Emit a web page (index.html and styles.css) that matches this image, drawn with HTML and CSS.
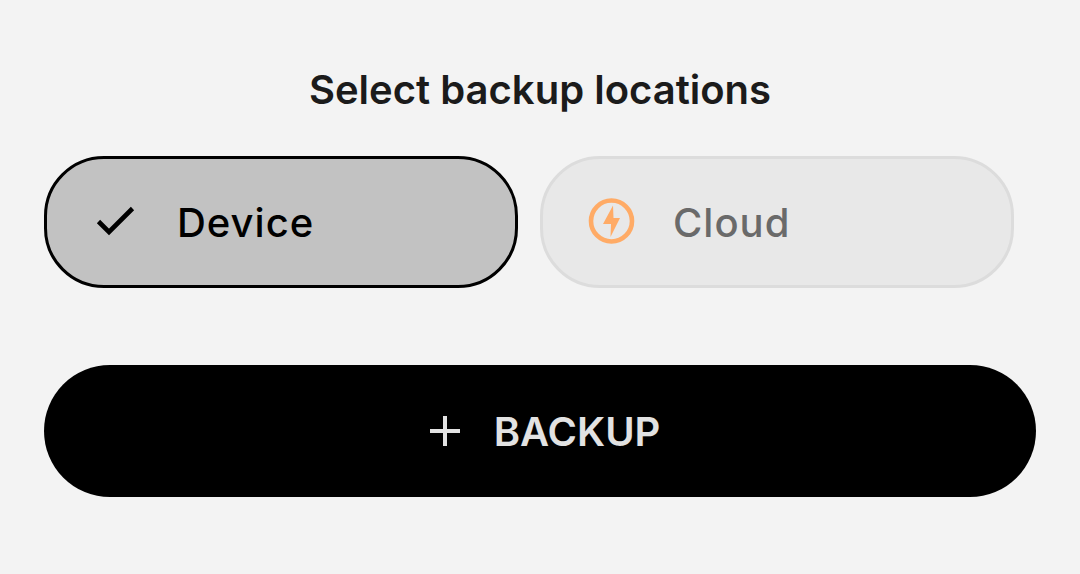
FILE: index.html
```
<!DOCTYPE html>
<html lang="en">
<head>
<meta charset="utf-8">
<meta name="viewport" content="width=device-width, initial-scale=1">
<title>Backup</title>
<link rel="stylesheet" href="styles.css">
</head>
<body>
<main class="panel">
  <h1 class="title">Select backup locations</h1>
  <div class="options">
    <button class="option selected" type="button" aria-pressed="true">
      <svg class="icon" viewBox="0 0 48 48" aria-hidden="true"><path fill="none" stroke="currentColor" stroke-width="4.600" d="M7.500 23.500 18 34 41.500 10.500"/></svg>
      <span>Device</span>
    </button>
    <button class="option" type="button" aria-pressed="false">
      <svg class="icon cloud-icon" viewBox="0 0 48 48" aria-hidden="true"><circle cx="24.500" cy="23" r="20.500" fill="none" stroke="currentColor" stroke-width="4.600"/><path fill="currentColor" d="M26 7.500 16 26h8l-.500 13L33 20h-6.500z"/></svg>
      <span>Cloud</span>
    </button>
  </div>
  <button class="backup" type="button">
    <svg class="plus" viewBox="0 0 30 30" aria-hidden="true"><path fill="none" stroke="currentColor" stroke-width="4" d="M15 0v30M0 15h30"/></svg>
    <span>BACKUP</span>
  </button>
</main>
</body>
</html>
```
FILE: styles.css
```
* { box-sizing: border-box; }
body {
  margin: 0;
  background: #f3f3f3;
  font-family: Inter, "Liberation Sans", sans-serif;
}
.panel { padding: 64px 44px; }
.title {
  margin: 0 0 40px;
  color: #1b1b1b;
  font-size: 40px;
  font-weight: 600;
  line-height: 52px;
  text-align: center;
}
.options {
  display: grid;
  grid-template-columns: 1fr 1fr;
  gap: 22px;
  margin-right: 22px;
}
.option {
  display: flex;
  align-items: center;
  gap: 38px;
  height: 132px;
  padding: 0 44px;
  border: 3px solid #dcdcdc;
  border-radius: 60px;
  background: #e8e8e8;
  color: #6a6a6a;
  font: inherit;
  font-size: 40px;
  font-weight: 500;
  letter-spacing: 1px;
}
.option.selected { border-color: #000; background: #c2c2c2; color: #000; }
.icon { width: 48px; height: 48px; }
.cloud-icon { color: #ffab66; }
.backup {
  display: flex;
  align-items: center;
  justify-content: center;
  gap: 34px;
  width: 100%;
  height: 132px;
  margin-top: 77px;
  padding: 0 0 0 10px;
  border: 0;
  border-radius: 66px;
  background: #000;
  color: #e2e2e2;
  font: inherit;
  font-size: 40px;
  font-weight: 600;
}
.plus { width: 30px; height: 30px; }
```
